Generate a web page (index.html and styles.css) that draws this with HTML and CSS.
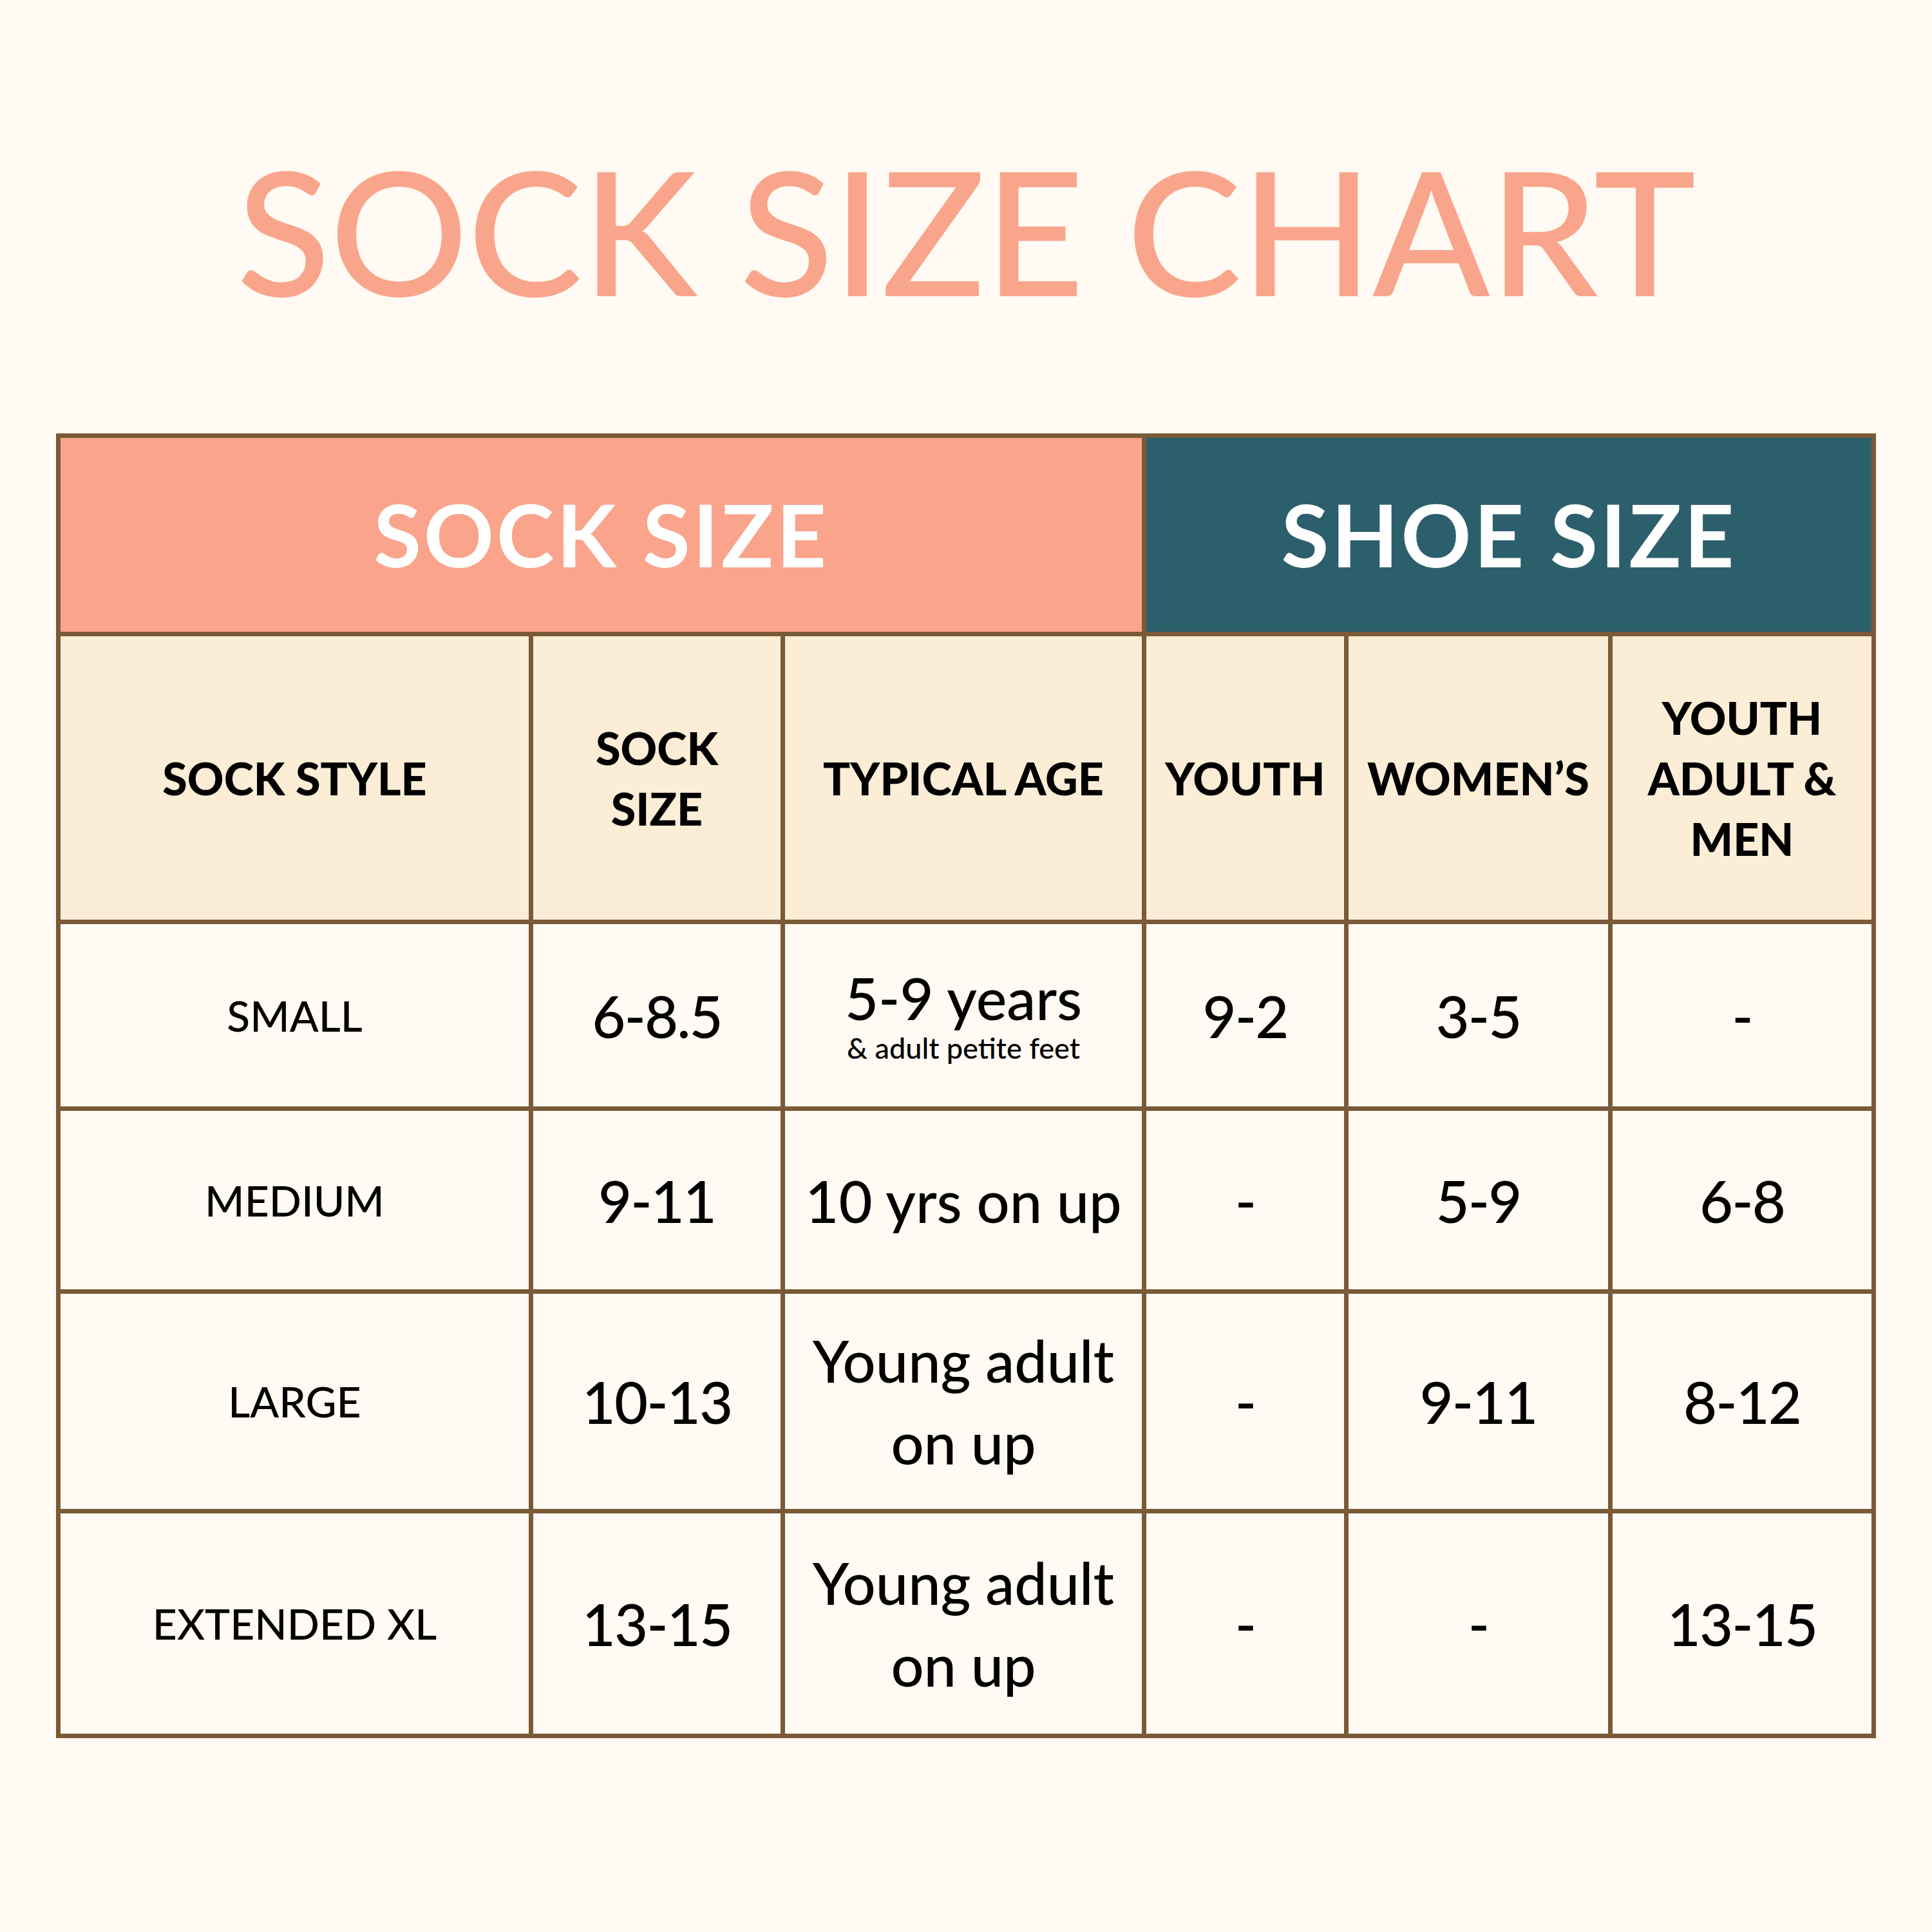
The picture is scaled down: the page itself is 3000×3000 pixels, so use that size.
FILE: index.html
```html
<!DOCTYPE html>
<html lang="en">
<head>
<meta charset="utf-8">
<title>Sock Size Chart</title>
<link rel="stylesheet" href="styles.css">
</head>
<body>
<main class="page">
  <h1 class="title">SOCK SIZE CHART</h1>
  <div class="chart">
    <div class="band band-sock">SOCK SIZE</div>
    <div class="band band-shoe">SHOE SIZE</div>

    <div class="th">SOCK STYLE</div>
    <div class="th">SOCK<br>SIZE</div>
    <div class="th">TYPICAL AGE</div>
    <div class="th">YOUTH</div>
    <div class="th">WOMEN’S</div>
    <div class="th">YOUTH<br>ADULT &amp;<br>MEN</div>

    <div class="td style">SMALL</div>
    <div class="td num">6-8.5</div>
    <div class="td age"><span class="age-main">5-9 years</span><span class="age-note">&amp; adult petite feet</span></div>
    <div class="td num">9-2</div>
    <div class="td num">3-5</div>
    <div class="td num">-</div>

    <div class="td style">MEDIUM</div>
    <div class="td num">9-11</div>
    <div class="td">10 yrs on up</div>
    <div class="td num">-</div>
    <div class="td num">5-9</div>
    <div class="td num">6-8</div>

    <div class="td style">LARGE</div>
    <div class="td num">10-13</div>
    <div class="td multi">Young adult<br>on up</div>
    <div class="td num">-</div>
    <div class="td num">9-11</div>
    <div class="td num">8-12</div>

    <div class="td style">EXTENDED XL</div>
    <div class="td num">13-15</div>
    <div class="td multi">Young adult<br>on up</div>
    <div class="td num">-</div>
    <div class="td num">-</div>
    <div class="td num">13-15</div>
  </div>
</main>
</body>
</html>
```

FILE: styles.css
```css
html, body {
  margin: 0;
  padding: 0;
  background: #FFFAF3;
}

.page {
  width: 3000px;
  height: 3000px;
  font-family: "Lato", "Liberation Sans", sans-serif;
  color: #000;
  padding-top: 222px;
  box-sizing: border-box;
}

.title {
  margin: 0;
  font-size: 268px;
  line-height: 268px;
  font-weight: 500;
  color: #F9A58B;
  text-align: center;
  letter-spacing: -1px;
}

.chart {
  margin-top: 183px;
  margin-left: 87px;
  width: fit-content;
  display: grid;
  grid-template-columns: 727px 384px 554px 307px 403px 402px;
  grid-template-rows: 301px 440px 283px 277px 334px 342px;
  gap: 7px;
  padding: 7px;
  background: #7A5A37;
}

.band {
  grid-column: span 3;
  display: flex;
  align-items: center;
  justify-content: center;
  color: #FFFFFF;
  font-size: 135px;
  font-weight: 700;
  letter-spacing: 4px;
  padding-bottom: 4px;
}

.band-sock { background: #F9A48B; }
.band-shoe { background: #2C5F6C; }

.th {
  background: #FCEDD6;
  display: flex;
  align-items: center;
  justify-content: center;
  text-align: center;
  font-size: 70px;
  line-height: 94px;
  font-weight: 900;
}

.td {
  background: #FFFAF3;
  display: flex;
  align-items: center;
  justify-content: center;
  text-align: center;
  font-size: 90px;
  line-height: 100px;
  font-weight: 500;
}

.td.num {
  letter-spacing: -2px;
}

.td.style {
  font-size: 66px;
}

.td.age {
  flex-direction: column;
}

.age-main {
  display: block;
  line-height: 100px;
}

.age-note {
  display: block;
  font-size: 45px;
  line-height: 56px;
}

.td.multi {
  line-height: 127px;
}
```
